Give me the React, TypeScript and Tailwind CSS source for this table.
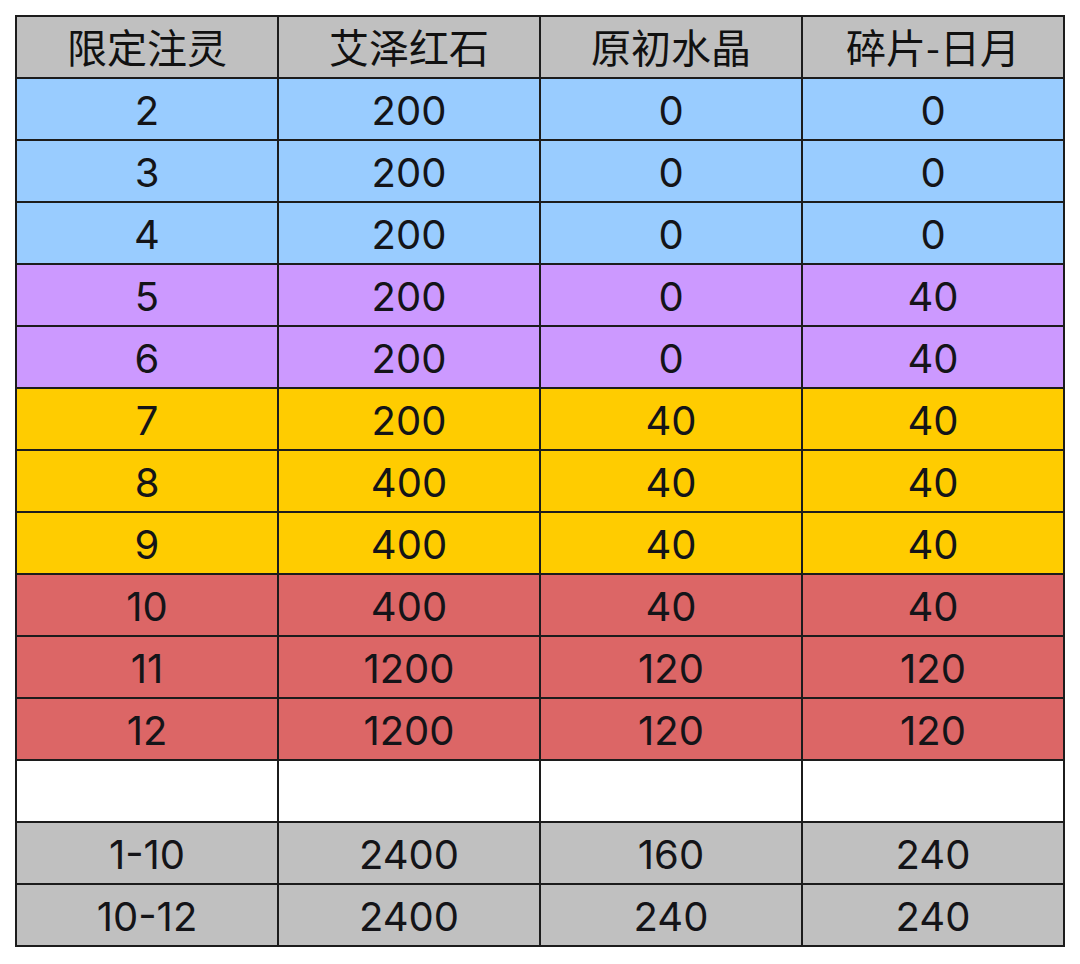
import React from "react";

type Row = { cells: string[]; bg: string };

const header = ["限定注灵", "艾泽红石", "原初水晶", "碎片-日月"];

const rows: Row[] = [
  { cells: ["2", "200", "0", "0"], bg: "bg-[#99ccff]" },
  { cells: ["3", "200", "0", "0"], bg: "bg-[#99ccff]" },
  { cells: ["4", "200", "0", "0"], bg: "bg-[#99ccff]" },
  { cells: ["5", "200", "0", "40"], bg: "bg-[#cc99ff]" },
  { cells: ["6", "200", "0", "40"], bg: "bg-[#cc99ff]" },
  { cells: ["7", "200", "40", "40"], bg: "bg-[#ffcc00]" },
  { cells: ["8", "400", "40", "40"], bg: "bg-[#ffcc00]" },
  { cells: ["9", "400", "40", "40"], bg: "bg-[#ffcc00]" },
  { cells: ["10", "400", "40", "40"], bg: "bg-[#dc6666]" },
  { cells: ["11", "1200", "120", "120"], bg: "bg-[#dc6666]" },
  { cells: ["12", "1200", "120", "120"], bg: "bg-[#dc6666]" },
  { cells: ["", "", "", ""], bg: "bg-white" },
  { cells: ["1-10", "2400", "160", "240"], bg: "bg-[#c0c0c0]" },
  { cells: ["10-12", "2400", "240", "240"], bg: "bg-[#c0c0c0]" },
];

export default function App() {
  return (
    <div className="w-[1080px] h-[964px] bg-white pt-[15px] pl-[15px]">
      <div className="grid grid-cols-[repeat(4,260px)] auto-rows-[60px] gap-[2px] p-[2px] bg-[#1c1c1c] w-fit">
        {/* header row */}
        {header.map((h) => (
          <div
            key={h}
            className="bg-[#c0c0c0] flex items-center justify-center pb-[2px] text-[40px] leading-none text-[#111] font-['Noto_Sans_CJK_SC',sans-serif]"
          >
            {h}
          </div>
        ))}
        {rows.map((row, r) =>
          row.cells.map((c, i) => (
            <div
              key={`${r}-${i}`}
              className={`${row.bg} flex items-center justify-center pt-[3px] text-[40px] leading-none text-[#141418] font-['Inter','Noto_Sans_CJK_SC',sans-serif]`}
            >
              {c}
            </div>
          ))
        )}
      </div>
    </div>
  );
}
